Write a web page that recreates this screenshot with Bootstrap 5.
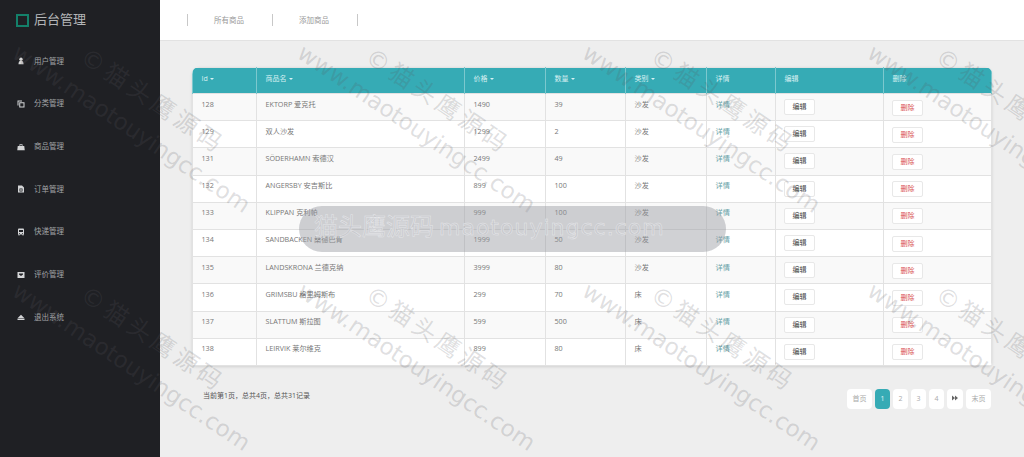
<!DOCTYPE html>
<html lang="zh-CN">
<head>
  <meta charset="UTF-8"/>
  <meta name="viewport" content="width=device-width, initial-scale=1.0"/>
  <title>后台管理</title>
  <link href="https://cdn.jsdelivr.net/npm/bootstrap@5.3.0/dist/css/bootstrap.min.css" rel="stylesheet"/>
  <style>
    html, body { height: 100%; overflow: hidden; }
    body {
      background: #eee;
      font-family: "Open Sans", "Noto Sans CJK SC", sans-serif;
      font-size: 7px;
      color: #777;
    }
    .app-shell { height: 457px; position: relative; overflow: hidden; }
    .side-bar { width: 160px; background: #1f2024; }
    .brand-box { height: 40px; padding-left: 16px; gap: 5px; color: #b4b6b8; font-size: 13px; }
    .brand-mark { width: 13px; height: 13px; border: 2px solid #14806a; }
    .side-link { height: 42.7px; padding-left: 17px; gap: 9px; color: #a2a4a7; font-size: 7.5px; }
    .side-link svg { width: 8px; height: 8px; fill: #d4d5d7; }
    .top-bar { height: 41px; background: #fff; border-bottom: 1px solid #e2e2e2; padding-left: 27px; }
    .top-link { width: 85px; height: 12px; line-height: 12px; border-left: 1px solid #c8c8c8; padding-left: 26px; color: #999; font-size: 7.5px; }
    .top-end { border-left: 1px solid #c8c8c8; height: 12px; }
    .main-area { padding: 26px 33px 0 32px; }
    .goods-box { border-radius: 7px 7px 4px 4px; overflow: hidden; background: #fff; box-shadow: 0 1px 3px rgba(0, 0, 0, .12); }
    .goods-table { table-layout: fixed; width: 799px; margin: 0; font-size: 7.2px; border-color: #e2e2e2; }
    .goods-table > :not(caption) > * > * { padding: 4.5px 8px 0 8.5px; height: 27.2px; color: #777; vertical-align: top; }
    .goods-table thead th { background: #36abb5; color: #d8f0f2; font-size: 7px; font-weight: 400; height: 26px; border-color: #7cc8ce; vertical-align: middle; padding-top: 0; padding-bottom: 2px; box-shadow: none; }
    .goods-table tbody tr:nth-child(odd) > * { background: #f9f9f9; box-shadow: none; }
    .goods-table tbody tr:nth-child(even) > * { background: #fff; box-shadow: none; }
    .goods-table .dropdown-toggle::after { margin-left: 2px; vertical-align: 1px; }
    .goods-table tbody td.cell-action { padding: 0 0 0 8px; vertical-align: middle; }
    .detail-link { color: #6aa3a8; text-decoration: none; }
    .act-btn { width: 31px; height: 16px; padding: 0; font-size: 7px; line-height: 14px; border: 1px solid #e8e8e8; border-radius: 2px; background: #fff; color: #444; }
    .act-btn.act-del { color: #d9534f; margin-top: 1px; }
    .foot-row { margin-top: 23px; padding: 0 1px 0 11px; }
    .foot-info { font-size: 7px; color: #555; padding-top: 2px; }
    .page-list { gap: 3px; margin: 0; }
    .page-list .page-item .page-link {
      height: 20px; line-height: 20px; padding: 0; margin: 0; min-width: 15px; text-align: center;
      font-size: 7px; color: #aaa; border: 0; border-radius: 4px; background: #fff;
    }
    .page-list .page-item .page-text { width: 25px; }
    .page-list .page-item .page-arrow { width: 16px; }
    .page-arrow svg { width: 6px; height: 6px; fill: #666; vertical-align: -0.5px; }
    .page-list .page-item.active .page-link { background: #36abb5; color: #e6f5f6; }
    .wm-layer {
      position: absolute; left: -270px; top: -199px; pointer-events: none;
      display: grid; grid-template-columns: repeat(5, 285px); grid-auto-rows: 238px;
    }
    .wm-tile { position: relative; }
    .wm-tile span {
      position: absolute; white-space: nowrap; transform: rotate(34deg); transform-origin: 0 50%;
      color: rgba(90, 90, 95, .2); font-family: "DejaVu Sans", "Noto Sans CJK SC", sans-serif; line-height: 1;
    }
    .wm-url { left: 0; top: 0; font-size: 23px; }
    .wm-mark { left: 68px; top: 3px; font-size: 24px; letter-spacing: 4px; }
    .wm-pill {
      position: absolute; left: 299px; top: 206px; width: 427px; height: 46px; border-radius: 23px;
      background: rgba(150, 152, 160, .45); color: #c8c9cd; -webkit-text-stroke: .5px #e6e7ea;
      line-height: 42px; padding-left: 15px; white-space: nowrap; pointer-events: none;
      font-family: "DejaVu Sans", "Noto Sans CJK SC", sans-serif;
    }
    .wm-pill-cn { font-size: 24px; margin-right: 5px; }
    .wm-pill-en { font-size: 22px; letter-spacing: 1px; }
  </style>
</head>
<body>
<div class="app-shell d-flex">
  <!-- Sidebar -->
  <aside class="side-bar flex-shrink-0">
    <div class="brand-box d-flex align-items-center">
      <span class="brand-mark"></span>
      <span>后台管理</span>
    </div>
    <div class="d-flex flex-column">
      <div class="side-link d-flex align-items-center">
        <svg viewBox="0 0 16 16"><circle cx="8" cy="4.500" r="3.400"/><path d="M3 14.500c0-4 1-6 3-6.500h4c2 .5 3 2.500 3 6.500z"/></svg>
        <span>用户管理</span>
      </div>
      <div class="side-link d-flex align-items-center">
        <svg viewBox="0 0 16 16"><path d="M1 1h9v2H3v8H1z"/><path fill-rule="evenodd" d="M4.500 4.500H15V15H4.500zm2 2V13H13V6.500z"/></svg>
        <span>分类管理</span>
      </div>
      <div class="side-link d-flex align-items-center">
        <svg viewBox="0 0 16 16"><path fill-rule="evenodd" d="M5 6V2.500h6V6h3.500l1 8.500H.5L1.500 6zm1.500 0h3V4h-3z"/></svg>
        <span>商品管理</span>
      </div>
      <div class="side-link d-flex align-items-center">
        <svg viewBox="0 0 16 16"><path fill-rule="evenodd" d="M2 1h8l4 4v10H2zm3 6v6h6V7zm1.500 1.500h3v3h-3z"/></svg>
        <span>订单管理</span>
      </div>
      <div class="side-link d-flex align-items-center">
        <svg viewBox="0 0 16 16"><path fill-rule="evenodd" d="M3 1h10l1 2v10h-1v2h-2v-2H5v2H3v-2H2V3zm1 3v4h8V4zm0 6v1.500h2V10zm6 0v1.500h2V10z"/></svg>
        <span>快递管理</span>
      </div>
      <div class="side-link d-flex align-items-center">
        <svg viewBox="0 0 16 16"><path fill-rule="evenodd" d="M1 2h14v12H1zm3 3v2l4 3 4-3V5z"/></svg>
        <span>评价管理</span>
      </div>
      <div class="side-link d-flex align-items-center">
        <svg viewBox="0 0 16 16"><path d="M8 3.500l6.500 6.500h-13z"/><path d="M1 11h14v3H1z"/></svg>
        <span>退出系统</span>
      </div>
    </div>
  </aside>

  <div class="flex-grow-1">
    <!-- Top tabs -->
    <div class="top-bar d-flex align-items-center">
      <div class="top-link">所有商品</div>
      <div class="top-link">添加商品</div>
      <div class="top-end"></div>
    </div>

    <div class="main-area">
      <div class="goods-box">
        <table class="table table-bordered goods-table">
          <colgroup>
            <col style="width:64px"/><col style="width:208px"/><col style="width:81px"/><col style="width:80px"/>
            <col style="width:81px"/><col style="width:69px"/><col style="width:108px"/><col style="width:108px"/>
          </colgroup>
          <thead>
            <tr>
              <th><span class="dropdown-toggle">Id</span></th>
              <th><span class="dropdown-toggle">商品名</span></th>
              <th><span class="dropdown-toggle">价格</span></th>
              <th><span class="dropdown-toggle">数量</span></th>
              <th><span class="dropdown-toggle">类别</span></th>
              <th>详情</th>
              <th>编辑</th>
              <th>删除</th>
            </tr>
          </thead>
          <tbody id="goodsBody"></tbody>
        </table>
      </div>

      <div class="foot-row d-flex justify-content-between align-items-start">
        <div class="foot-info">当前第1页，总共4页，总共31记录</div>
        <ul class="pagination page-list">
          <li class="page-item"><a class="page-link page-text" href="#">首页</a></li>
          <li class="page-item active"><a class="page-link" href="#">1</a></li>
          <li class="page-item"><a class="page-link" href="#">2</a></li>
          <li class="page-item"><a class="page-link" href="#">3</a></li>
          <li class="page-item"><a class="page-link" href="#">4</a></li>
          <li class="page-item"><a class="page-link page-arrow" href="#"><svg viewBox="0 0 12 12"><path d="M0 1l6 5-6 5zM6 1l6 5-6 5z"/></svg></a></li>
          <li class="page-item"><a class="page-link page-text" href="#">末页</a></li>
        </ul>
      </div>
    </div>
  </div>

  <!-- Watermark overlay -->
  <div class="wm-layer" id="wmLayer"></div>
  <div class="wm-pill"><span class="wm-pill-cn">猫头鹰源码</span><span class="wm-pill-en">maotouyingcc.com</span></div>
</div>

<script>
  const goods = [
    [128, "EKTORP 爱克托", 1490, 39, "沙发"],
    [129, "双人沙发", 1299, 2, "沙发"],
    [131, "SÖDERHAMN 索德汉", 2499, 49, "沙发"],
    [132, "ANGERSBY 安吉斯比", 899, 100, "沙发"],
    [133, "KLIPPAN 克利帕", 999, 100, "沙发"],
    [134, "SANDBACKEN 桑德巴肯", 1999, 50, "沙发"],
    [135, "LANDSKRONA 兰德克纳", 3999, 80, "沙发"],
    [136, "GRIMSBU 格里姆斯布", 299, 70, "床"],
    [137, "SLATTUM 斯拉图", 599, 500, "床"],
    [138, "LEIRVIK 莱尔维克", 899, 80, "床"],
  ];

  document.getElementById("goodsBody").innerHTML = goods.map(g => `
    <tr>
      <td>${g[0]}</td>
      <td>${g[1]}</td>
      <td>${g[2]}</td>
      <td>${g[3]}</td>
      <td>${g[4]}</td>
      <td><a class="detail-link" href="#">详情</a></td>
      <td class="cell-action"><button class="btn act-btn">编辑</button></td>
      <td class="cell-action"><button class="btn act-btn act-del">删除</button></td>
    </tr>
  `).join("");

  document.getElementById("wmLayer").innerHTML = Array(15).fill(
    `<div class="wm-tile"><span class="wm-url">www.maotouyingcc.com</span><span class="wm-mark">©猫头鹰源码</span></div>`
  ).join("");
</script>
<script src="https://cdn.jsdelivr.net/npm/bootstrap@5.3.0/dist/js/bootstrap.bundle.min.js"></script>
</body>
</html>
